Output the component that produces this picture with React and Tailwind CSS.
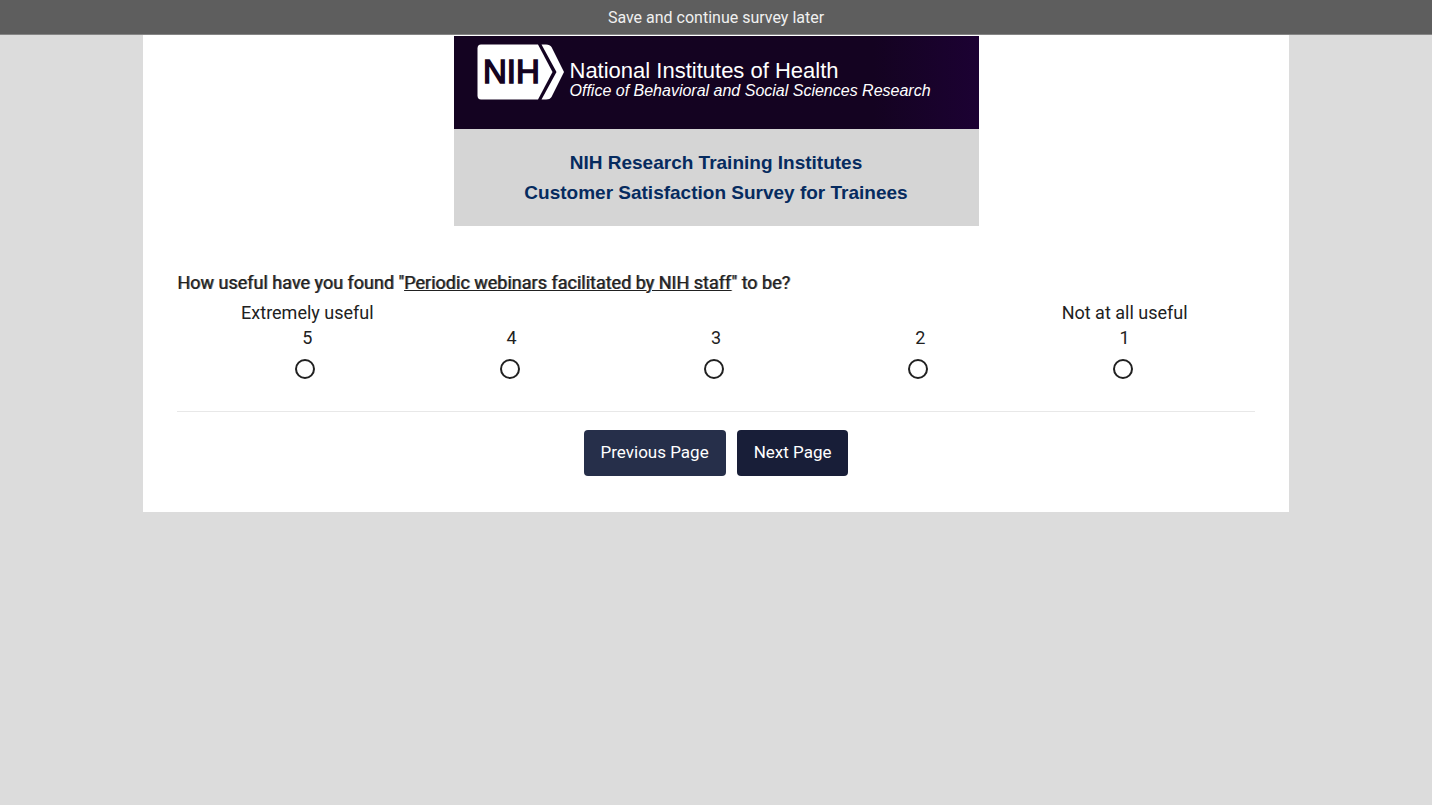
import React, { useState } from 'react';

const options = [
    { value: 5, label: 'Extremely useful' },
    { value: 4, label: '' },
    { value: 3, label: '' },
    { value: 2, label: '' },
    { value: 1, label: 'Not at all useful' },
];

const NihLogo = () => (
    <svg viewBox="0 0 88 56" className="w-[88px] h-14 shrink-0">
        <path d="M4 0.5H61L75.5 28L61 55.5H4Q0.5 55.5 0.5 51.5V4.5Q0.5 0.5 4 0.5Z" fill="#fff" />
        <path d="M64.5 0.5H69Q73 0.5 74.5 3L87 28L74.5 53Q73 55.5 69 55.5H64.5L79.5 28Z" fill="#fff" />
        <text x="6" y="39" fontSize="33" fill="#140321" stroke="#140321" strokeWidth="1.5">NIH</text>
    </svg>
);

const Banner = () => (
    <header className="w-[525px] max-w-full mx-auto font-['Liberation_Sans',Arial,sans-serif]">
        <div className="h-[93px] pl-[23px] pt-2 flex items-start gap-[5px] text-white bg-linear-to-r from-[#140321] from-80% to-[#1c0133]">
            <NihLogo />
            <div className="pt-[17px] whitespace-nowrap">
                <p className="text-[22px] leading-5">National Institutes of Health</p>
                <p className="text-[16px] leading-5 italic">Office of Behavioral and Social Sciences Research</p>
            </div>
        </div>
        <h1 className="h-[97px] pt-[19px] bg-[#d5d5d5] text-[#062b5f] text-center text-[19px] leading-[30px] font-bold">
            NIH Research Training Institutes
            <br />
            Customer Satisfaction Survey for Trainees
        </h1>
    </header>
);

const App = () => {
    const [answer, setAnswer] = useState(null);

    return (
        <div className="min-h-screen bg-[#dcdcdc] text-[#212121] font-[Roboto,sans-serif]">
            <button type="button" className="block w-full h-[35px] pt-0.5 bg-[#5e5e5e] text-[#f0f0f0] text-base border-b border-[#858585]">
                Save and continue survey later
            </button>

            <main className="w-4/5 mx-auto bg-white pt-px px-[34px] pb-9">
                <Banner />

                <form onSubmit={(e) => e.preventDefault()}>
                    <fieldset className="mt-[43px]">
                        <legend className="text-[18px] leading-7 text-shadow-[1px_0_0_#21212199]">
                            How useful have you found &quot;<span className="underline">Periodic webinars facilitated by NIH staff</span>&quot; to be?
                        </legend>

                        <div className="grid grid-cols-5 px-7 pt-[3px]">
                            {options.map((option) => (
                                <label key={option.value} className="flex flex-col items-center text-[18px] leading-[25px]">
                                    <span className="h-[25px]">{option.label}</span>
                                    <span>{option.value}</span>
                                    <input
                                        type="radio"
                                        name="usefulness"
                                        value={option.value}
                                        checked={answer === option.value}
                                        onChange={() => setAnswer(option.value)}
                                        className="appearance-none size-5 mt-[9px] mr-1 rounded-full border-2 border-[#212121] bg-white checked:bg-[#212121] checked:shadow-[inset_0_0_0_3px_white]"
                                    />
                                </label>
                            ))}
                        </div>
                    </fieldset>

                    <hr className="mt-8 border-[#e8e8e8]" />

                    <div className="flex justify-center gap-[11px] mt-[18px]">
                        <button type="button" className="h-[46px] px-[17px] rounded bg-[#262f4a] text-white text-[17px]">
                            Previous Page
                        </button>
                        <button type="submit" className="h-[46px] px-[17px] rounded bg-[#181e38] text-white text-[17px]">
                            Next Page
                        </button>
                    </div>
                </form>
            </main>
        </div>
    );
};

export default App;
